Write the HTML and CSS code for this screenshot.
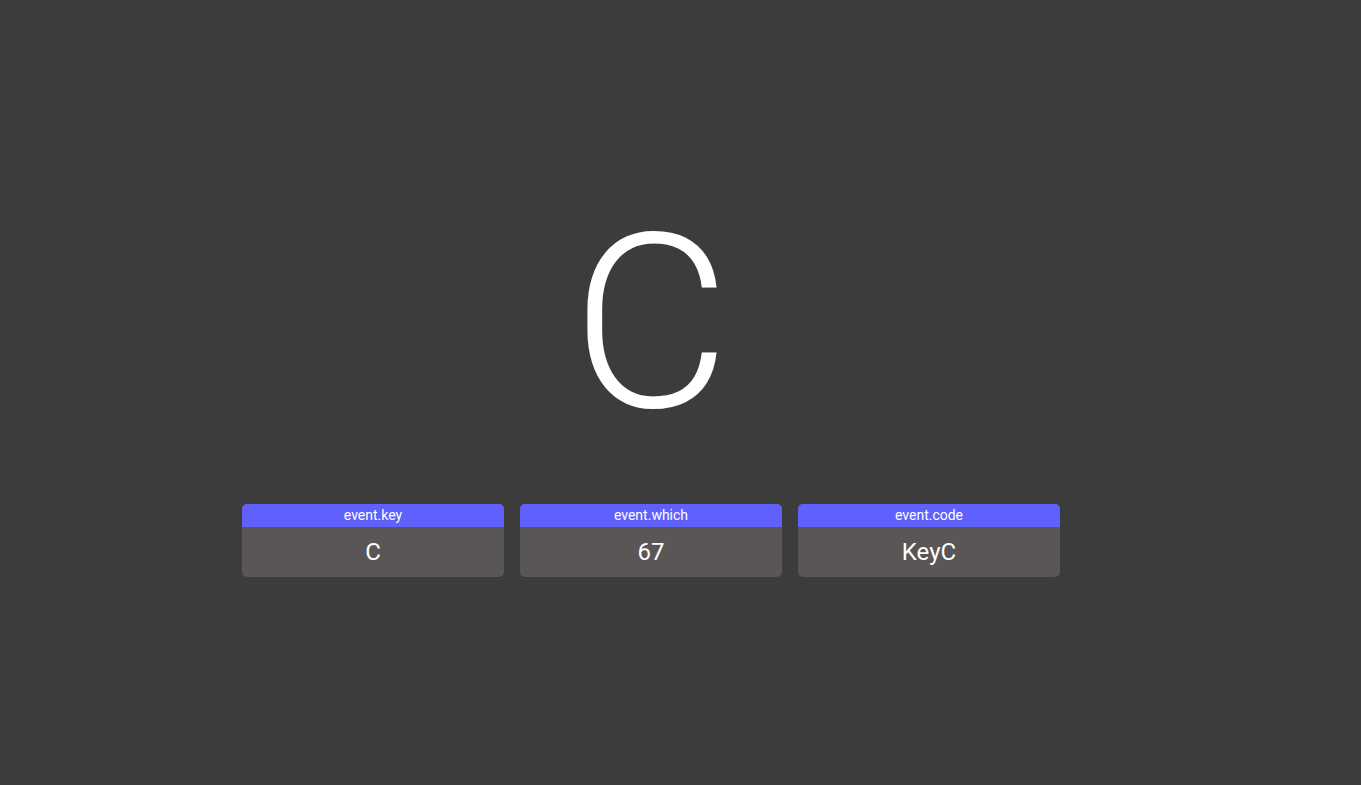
FILE: index.html
```html
<!DOCTYPE html>
<html>
<head>
<meta charset="utf-8">
<link rel="stylesheet" href="styles.css">
</head>
<body>
<main class="page">
  <div class="key">C</div>
  <div class="cards">
    <div class="card">
      <div class="card-title">event.key</div>
      <div class="card-value">C</div>
    </div>
    <div class="card">
      <div class="card-title">event.which</div>
      <div class="card-value">67</div>
    </div>
    <div class="card">
      <div class="card-title">event.code</div>
      <div class="card-value">KeyC</div>
    </div>
  </div>
</main>
</body>
</html>
```
FILE: styles.css
```css
html, body {
  margin: 0;
  padding: 0;
  height: 100%;
}
body {
  background: #3c3c3c;
  color: #ffffff;
  font-family: Roboto, "Liberation Sans", sans-serif;
}
.page {
  width: 818px;
  margin-left: 242px;
  padding-top: 174px;
  display: flex;
  flex-direction: column;
  align-items: center;
}
.key {
  font-size: 244px;
  line-height: 300px;
  font-weight: 300;
  text-align: center;
}
.cards {
  margin-top: 30px;
  display: grid;
  grid-template-columns: repeat(3, 262px);
  gap: 16px;
}
.card {
  border-radius: 5px;
  overflow: hidden;
  background: #5a5655;
}
.card-title {
  background: #6060fd;
  height: 23px;
  line-height: 23px;
  font-size: 14px;
  text-align: center;
}
.card-value {
  height: 50px;
  line-height: 50px;
  font-size: 24px;
  text-align: center;
}
```
